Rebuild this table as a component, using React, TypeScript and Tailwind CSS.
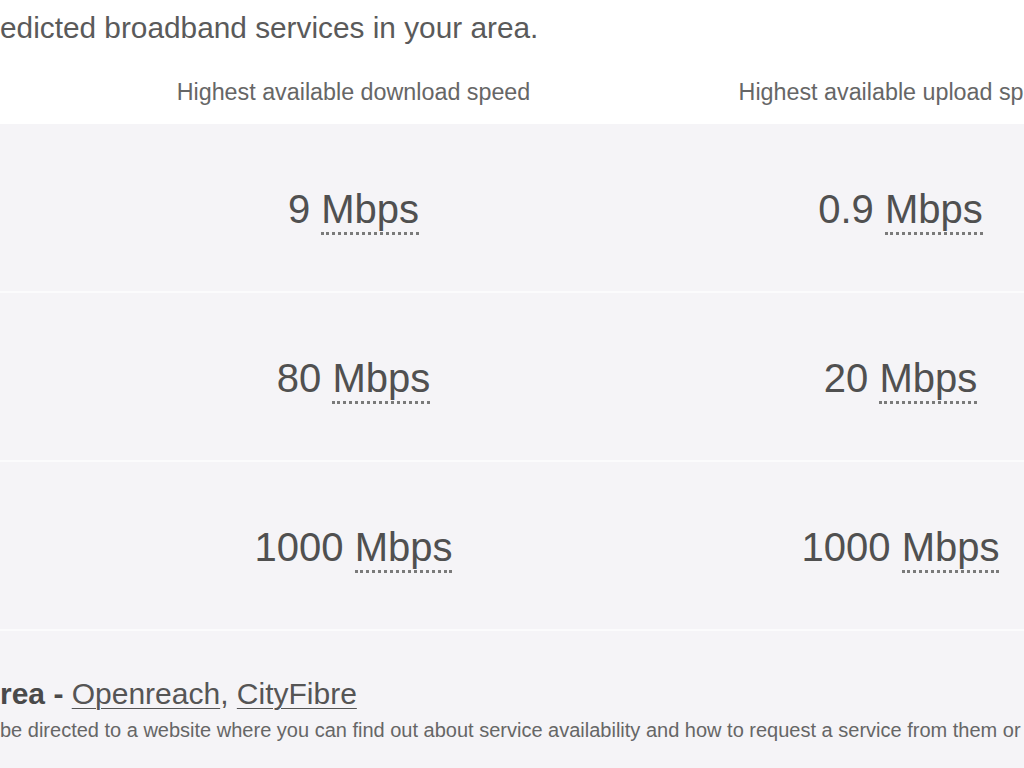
import React from 'react';

const rows = [
  { down: '9', up: '0.9' },
  { down: '80', up: '20' },
  { down: '1000', up: '1000' },
];

function Speed({ value }: { value: string }) {
  return (
    <span className="text-[40px] leading-none text-[#505050]">
      {value}{' '}
      <abbr
        title="Megabits per second"
        className="no-underline inline-block border-b-[3px] border-dotted border-[#7a7a7a] pb-[3px]"
      >
        Mbps
      </abbr>
    </span>
  );
}

export default function App() {
  return (
    <div
      className="w-[1024px] h-[768px] overflow-hidden bg-[#f5f4f7]"
      style={{ fontFamily: '"Liberation Sans", Arial, sans-serif' }}
    >
      {/* Intro + column headers */}
      <div className="bg-white h-[124px] flex flex-col">
        <p className="text-[29.8px] leading-none text-[#5a5a5a] pt-[13px] whitespace-nowrap">
          edicted broadband services in your area.
        </p>
        <div className="grid grid-cols-[80px_547px_547px] mt-[38px]">
          <div />
          <div className="text-center text-[23.3px] leading-none text-[#666] whitespace-nowrap">Highest available download speed</div>
          <div className="text-center text-[23.3px] leading-none text-[#666] whitespace-nowrap">Highest available upload speed</div>
        </div>
      </div>

      {/* Speed rows */}
      <div className="flex flex-col">
        {rows.map((r, i) => (
          <div
            key={i}
            className="grid grid-cols-[80px_547px_547px] h-[169px] border-b-2 border-[#fbfbfc] items-center"
          >
            <div />
            <div className="flex justify-center pt-[9px]">
              <Speed value={r.down} />
            </div>
            <div className="flex justify-center pt-[9px]">
              <Speed value={r.up} />
            </div>
          </div>
        ))}
      </div>

      {/* Providers */}
      <div className="pt-[48px] whitespace-nowrap">
        <p className="text-[30px] leading-none text-[#555]">
          <span className="font-bold text-[#4a4a4a]">rea - </span>
          <a href="#" className="underline underline-offset-4 decoration-1 text-[#555]">Openreach</a>
          <span>, </span>
          <a href="#" className="underline underline-offset-4 decoration-1 text-[#555]">CityFibre</a>
        </p>
        <p className="text-[20px] leading-none text-[#666] mt-[11px]">
          be directed to a website where you can find out about service availability and how to request a service from them or check
        </p>
      </div>
    </div>
  );
}
